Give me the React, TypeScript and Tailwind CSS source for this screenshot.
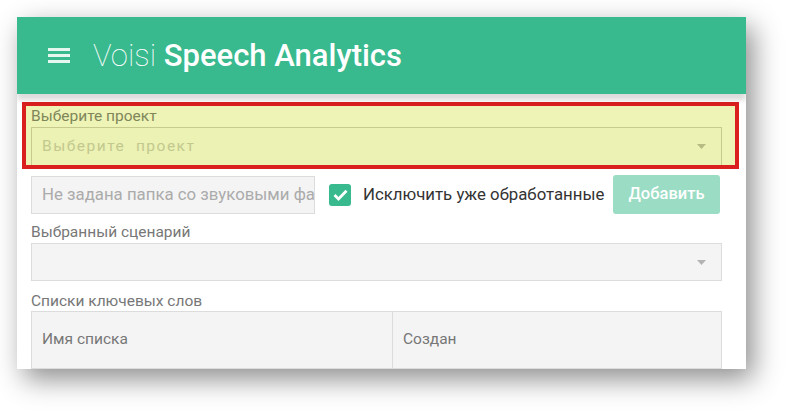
import React from "react";

const font = { fontFamily: "Roboto, 'Noto Sans', sans-serif" };

function Caret({ color }: { color: string }) {
  return (
    <svg width="9" height="5" viewBox="0 0 9 5">
      <path d="M0 0 L9 0 L4.5 5 Z" fill={color} />
    </svg>
  );
}

export default function App() {
  return (
    <div className="min-h-screen bg-white pl-[17px] pt-[17px]" style={font}>
      <div className="w-[729px] h-[352px] overflow-hidden bg-white flex flex-col shadow-[7px_10px_26px_rgba(0,0,0,0.45)]">
        {/* header */}
        <header className="relative z-10 h-[77px] shrink-0 bg-[#38b98e] flex items-center pl-[31px] shadow-[0_6px_5px_rgba(0,0,0,0.14)]">
          <div className="flex flex-col gap-[3.5px] w-[22px]">
            <span className="block h-[2.5px] bg-[#e6f7f0]" />
            <span className="block h-[2.5px] bg-[#e6f7f0]" />
            <span className="block h-[2.5px] bg-[#e6f7f0]" />
          </div>
          <h1 className="ml-[23px] text-[31px] leading-none text-white">
            <span className="font-thin">Voisi</span> <span className="font-medium">Speech Analytics</span>
          </h1>
        </header>

        <main className="flex-1 pt-[8px] bg-white">
          {/* highlighted project select */}
          <div className="ml-[5px] mr-[7px] border-[4px] border-[#d9201f] bg-[#eef4b6] pl-[5px] pr-[13px]">
            <div className="h-[20px] text-[15.5px] leading-[20px] text-[#7f865a]">Выберите проект</div>
            <div className="mt-[1px] h-[38px] border border-b-0 border-[#c6ca8d] bg-[#ebf2b3] flex items-center justify-between pl-[10px] pr-[15px]">
              <span className="text-[15.5px] tracking-[1.5px] text-[#c3c88f]">Выберите&nbsp; проект</span>
              <Caret color="#b6bb84" />
            </div>
          </div>

          {/* folder row */}
          <div className="mt-[6px] pl-[14px] pr-[26px] flex items-center">
            <div className="w-[284px] h-[38px] border border-[#dcdcdc] bg-[#f4f4f4] flex items-center pl-[10px] overflow-hidden whitespace-nowrap">
              <span className="text-[16.8px] text-[#ababab]">Не задана папка со звуковыми файлами</span>
            </div>
            <div className="ml-[14px] w-[22px] h-[22px] rounded-[3px] bg-[#38b98e] flex items-center justify-center">
              <svg width="15" height="12" viewBox="0 0 15 12">
                <path d="M1.5 6 L5.5 10 L13.5 1.8" fill="none" stroke="white" strokeWidth="2.8" />
              </svg>
            </div>
            <span className="ml-[12px] text-[16.8px] text-[#333]">Исключить уже обработанные</span>
            <button className="ml-auto w-[107px] h-[39px] rounded-[3px] bg-[#9adcc4] text-white text-[16.5px] font-medium">
              Добавить
            </button>
          </div>

          {/* scenario */}
          <div className="pl-[14px] pr-[24px]">
            <div className="mt-[8px] h-[20px] text-[15.5px] leading-[20px] text-[#777]">Выбранный сценарий</div>
            <div className="mt-[1px] h-[38px] border border-[#dcdcdc] bg-[#f4f4f4] flex items-center justify-end pr-[15px]">
              <Caret color="#b3b3b3" />
            </div>

            <div className="mt-[10px] h-[20px] text-[15.5px] leading-[20px] text-[#777]">Списки ключевых слов</div>
            <div className="grid grid-cols-[361px_1fr] border border-[#dcdcdc] bg-[#f4f4f4]">
              <div className="h-[57px] border-r border-b border-[#dcdcdc] flex items-center pl-[10px] text-[15.5px] text-[#777]">
                Имя списка
              </div>
              <div className="h-[57px] border-b border-[#dcdcdc] flex items-center pl-[10px] text-[15.5px] text-[#777]">
                Создан
              </div>
            </div>
          </div>
        </main>
      </div>
    </div>
  );
}
